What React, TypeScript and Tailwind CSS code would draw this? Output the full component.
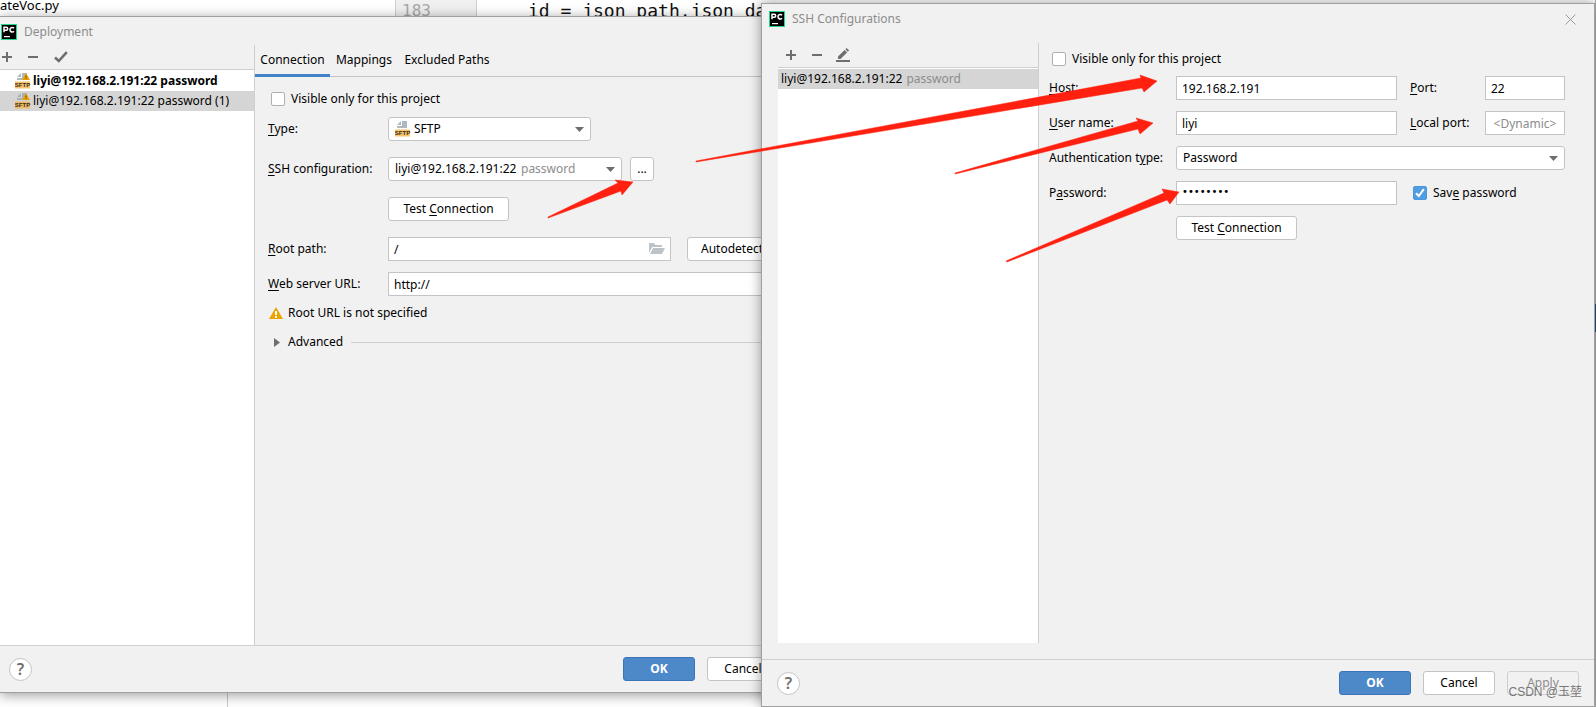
import React, { useState } from "react";

const inputStyle =
  "h-6 min-w-0 border border-[#c4c4c4] bg-white px-[5px] text-black outline-none placeholder:text-[#8c8c8c]";
const buttonStyle =
  "flex h-6 shrink-0 items-center justify-center rounded-[3px] border border-[#c4c4c4] bg-white text-black";
const primaryStyle =
  "flex h-6 w-[72px] shrink-0 items-center justify-center rounded-[3px] border border-[#3b75b8] bg-[#4d89c9] font-bold text-white";

const Mnemonic = ({ text, at = 0 }: { text: string; at?: number }) => (
  <span className="whitespace-pre">
    {text.slice(0, at)}
    <u className="underline-offset-2">{text[at]}</u>
    {text.slice(at + 1)}
  </span>
);

const PyCharmIcon = () => (
  <svg width="16" height="16" viewBox="0 0 16 16" className="shrink-0" aria-hidden="true">
    <rect width="16" height="16" fill="#21d789" />
    <rect x="1" y="1" width="14" height="14" fill="#000" />
    <path
      d="M3 8.2V3.2h2.2a1.5 1.5 0 0 1 0 3H3M13 4.2a2.3 2.3 0 1 0 0 3"
      fill="none"
      stroke="#fff"
      strokeWidth="1.5"
    />
    <rect x="3" y="12" width="6" height="1.2" fill="#fff" />
  </svg>
);

const SftpIcon = ({ warning = false }: { warning?: boolean }) => (
  <svg width="16" height="16" viewBox="0 0 16 16" className="shrink-0" aria-hidden="true">
    <path d="M7 0h5v7H2V5h5z" fill="#9aa7b0" fillOpacity="0.8" />
    <path d="M6 0v4H2z" fill="#9aa7b0" fillOpacity="0.8" />
    <rect x="0" y="8.5" width="15" height="7" fill="#f4af3d" fillOpacity="0.75" />
    <text
      x="7.5"
      y="14.2"
      textAnchor="middle"
      fontSize="6"
      fontWeight="700"
      fontFamily="Liberation Sans, sans-serif"
      fill="#3a2c12"
    >
      SFTP
    </text>
    {warning && (
      <>
        <path d="M11 0 15 7H7z" fill="#eda200" />
        <path d="M10.5 2.5h1v2.2h-1zM10.5 5.3h1v1h-1z" fill="#6b4a00" />
      </>
    )}
  </svg>
);

const PlusIcon = () => (
  <svg width="10" height="10" viewBox="0 0 10 10" aria-hidden="true">
    <path d="M5 0v10M0 5h10" stroke="#6e6e6e" strokeWidth="2" />
  </svg>
);

const MinusIcon = () => (
  <svg width="10" height="10" viewBox="0 0 10 10" aria-hidden="true">
    <path d="M0 5h10" stroke="#6e6e6e" strokeWidth="2" />
  </svg>
);

const CheckIcon = () => (
  <svg width="14" height="12" viewBox="0 0 14 12" aria-hidden="true">
    <path d="M1 6.5 4.8 10 12.8 1.2" fill="none" stroke="#6e6e6e" strokeWidth="2.6" />
  </svg>
);

const EditIcon = () => (
  <svg width="14" height="14" viewBox="0 0 14 14" aria-hidden="true">
    <path d="M2 11V8.4L8.6 2l2.5 2.5L4.5 11z" fill="#6e6e6e" />
    <path d="M9.4 1.3 10.7 0l2.4 2.4-1.3 1.3z" fill="#6e6e6e" />
    <rect x="0" y="12" width="14" height="2" fill="#6e6e6e" />
  </svg>
);

const FolderIcon = () => (
  <svg width="16" height="12" viewBox="0 0 16 12" aria-hidden="true">
    <path d="M0 0h5l1.5 2H13v2H3.2L0 10z" fill="#bcc4c9" />
    <path d="M4 5h12l-3 6H1z" fill="#bcc4c9" />
  </svg>
);

const WarningIcon = () => (
  <svg width="14" height="12" viewBox="0 0 14 12" aria-hidden="true">
    <path d="M7 0 14 12H0z" fill="#eda200" />
    <path d="M6 4h2v4H6zM6 9h2v2H6z" fill="#fff" />
  </svg>
);

type SelectProps = {
  id: string;
  value: string;
  detail?: string;
  icon?: React.ReactNode;
  className: string;
};

const Select = ({ id, value, detail, icon, className }: SelectProps) => (
  <div
    className={`relative flex h-6 items-center rounded-[3px] border border-[#c4c4c4] bg-white pl-1.5 ${className}`}
  >
    {icon}
    <select
      id={id}
      className={`h-full appearance-none bg-transparent text-black outline-none ${
        icon ? "pl-[3px]" : ""
      } ${detail ? "" : "grow"}`}
    >
      <option>{value}</option>
    </select>
    {detail && <span className="ml-1 grow text-[#8c8c8c]">{detail}</span>}
    <svg
      width="9"
      height="5"
      viewBox="0 0 9 5"
      className="pointer-events-none absolute right-1.5"
      aria-hidden="true"
    >
      <path d="M0 0h9L4.5 5z" fill="#6e6e6e" />
    </svg>
  </div>
);

type CheckboxProps = {
  checked: boolean;
  onChange: (checked: boolean) => void;
  children: React.ReactNode;
};

const Checkbox = ({ checked, onChange, children }: CheckboxProps) => (
  <label className="flex items-center gap-1.5">
    <span className="relative flex">
      <input
        type="checkbox"
        checked={checked}
        onChange={(e) => onChange(e.target.checked)}
        className="size-3.5 appearance-none rounded-[2px] border border-[#b0b0b0] bg-white checked:border-[#4b97d9] checked:bg-[#4f9ee3]"
      />
      {checked && (
        <svg
          width="14"
          height="14"
          viewBox="0 0 14 14"
          className="pointer-events-none absolute inset-0"
          aria-hidden="true"
        >
          <path d="M3 7.2 5.8 10 10.8 3.2" fill="none" stroke="#fff" strokeWidth="2" />
        </svg>
      )}
    </span>
    {children}
  </label>
);

const HelpButton = () => (
  <button
    aria-label="Help"
    className="flex size-[23px] items-center justify-center rounded-full border border-[#c4c4c4] bg-white text-base font-semibold text-[#6e6e6e]"
  >
    ?
  </button>
);

const Editor = () => (
  <div className="flex h-full bg-white">
    <div className="flex w-[395px] flex-col justify-between">
      <p className="h-4 text-[13px] leading-[11px]">ateVoc.py</p>
      <div className="h-4 w-[228px] border-r border-[#c9c9c9]" />
    </div>
    <div className="flex h-4 grow font-['DejaVu_Sans_Mono',monospace] leading-[22px]">
      <div className="w-[82px] border-x border-[#d0d0d0] bg-[#f0f0f0] pl-1.5 text-base leading-[22px] text-[#a8a8a8]">
        183
      </div>
      <pre className="pl-[51px] font-['DejaVu_Sans_Mono',monospace] text-lg leading-[22px] text-[#111]">
        id = json_path.json_da
      </pre>
    </div>
    <div className="flex w-px flex-col bg-[#b5b5b5] pt-[304px]">
      <div className="h-7 bg-[#26508f]" />
    </div>
  </div>
);

const Deployment = () => {
  const [onlyProject, setOnlyProject] = useState(false);

  return (
    <section className="absolute top-4 bottom-3.5 left-0 flex w-[calc(50%+20px)] flex-col border-y border-[#a0a0a0] bg-[#f1f1f1] shadow-[0_2px_12px_rgba(0,0,0,0.4)]">
      <div className="flex h-7 items-center gap-[7px] pt-0.5 pl-px text-[#8c8c8c]">
        <PyCharmIcon />
        <h1>Deployment</h1>
      </div>
      <div className="flex min-h-0 grow">
        <div className="flex w-[255px] shrink-0 flex-col border-r border-[#cfcfcf]">
          <div className="flex h-[25px] shrink-0 items-center gap-4 border-b border-[#cfcfcf] pl-0.5">
            <button aria-label="Add">
              <PlusIcon />
            </button>
            <button aria-label="Remove">
              <MinusIcon />
            </button>
            <button aria-label="Use as default">
              <CheckIcon />
            </button>
          </div>
          <ul className="grow bg-white pt-px">
            <li className="flex h-5 items-center gap-0.5 pl-[15px] font-bold">
              <SftpIcon warning />
              liyi@192.168.2.191:22 password
            </li>
            <li className="flex h-5 items-center gap-0.5 bg-[#d5d5d5] pl-[15px]">
              <SftpIcon warning />
              liyi@192.168.2.191:22 password (1)
            </li>
          </ul>
        </div>
        <div className="flex min-w-0 grow flex-col">
          <nav className="flex h-8 shrink-0 border-b border-[#c4c4c4]">
            <button className="h-8 w-[75px] border-b-3 border-[#4083c9]">Connection</button>
            <button className="h-8 w-[68px] border-b-3 border-transparent">Mappings</button>
            <button className="h-8 w-[98px] border-b-3 border-transparent">Excluded Paths</button>
          </nav>
          <div className="flex flex-col pt-[14px] pl-[13px]">
            <div className="flex h-4 items-center pl-[3px]">
              <Checkbox checked={onlyProject} onChange={setOnlyProject}>
                Visible only for this project
              </Checkbox>
            </div>
            <div className="mt-2.5 grid grid-cols-[120px_1fr] items-center gap-y-4">
              <label htmlFor="type">
                <Mnemonic text="Type:" />
              </label>
              <Select id="type" value="SFTP" icon={<SftpIcon />} className="w-[203px]" />
              <label htmlFor="ssh">
                <Mnemonic text="SSH configuration:" />
              </label>
              <div className="flex gap-2">
                <Select
                  id="ssh"
                  value="liyi@192.168.2.191:22"
                  detail="password"
                  className="w-[234px]"
                />
                <button className={`${buttonStyle} w-6`}>...</button>
              </div>
              <button className={`${buttonStyle} col-start-2 w-[121px]`}>
                <Mnemonic text="Test Connection" at={5} />
              </button>
            </div>
            <div className="mt-4 grid grid-cols-[120px_1fr] items-center gap-y-[11px]">
              <label htmlFor="root">
                <Mnemonic text="Root path:" />
              </label>
              <div className="flex gap-4">
                <div className="relative flex w-[283px] items-center">
                  <input id="root" defaultValue="/" className={`${inputStyle} w-full`} />
                  <button aria-label="Browse" className="absolute right-1.5">
                    <FolderIcon />
                  </button>
                </div>
                <button className={`${buttonStyle} w-[90px]`}>Autodetect</button>
              </div>
              <label htmlFor="url">
                <Mnemonic text="Web server URL:" />
              </label>
              <input id="url" defaultValue="http://" className={inputStyle} />
            </div>
            <p className="mt-[7px] flex h-5 items-center gap-[5px] pl-px">
              <WarningIcon />
              Root URL is not specified
            </p>
            <div className="mt-[9px] flex h-5 items-center">
              <button className="flex items-center gap-2 pl-1.5">
                <svg width="6" height="9" viewBox="0 0 6 9" aria-hidden="true">
                  <path d="M0 0v9l6-4.5z" fill="#6e6e6e" />
                </svg>
                Advanced
              </button>
              <div className="ml-2 h-px grow bg-[#cfcfcf]" />
            </div>
          </div>
        </div>
      </div>
      <div className="flex h-[47px] shrink-0 items-center border-t border-[#cfcfcf] pl-[9px]">
        <HelpButton />
        <button className={`${primaryStyle} mr-3 ml-auto`}>OK</button>
        <button className={`${buttonStyle} mr-[39px] w-[72px]`}>Cancel</button>
      </div>
    </section>
  );
};

const SshConfigurations = () => {
  const [onlyProject, setOnlyProject] = useState(false);
  const [savePassword, setSavePassword] = useState(true);

  return (
    <section className="absolute top-[3px] right-px bottom-0 left-[761px] flex flex-col border border-[#a0a0a0] bg-[#f1f1f1] shadow-[0_0_12px_rgba(0,0,0,0.4)]">
      <div className="flex h-7 shrink-0 items-center gap-[7px] pt-0.5 pr-[18px] pl-[7px] text-[#8c8c8c]">
        <PyCharmIcon />
        <h1>SSH Configurations</h1>
        <button aria-label="Close" className="ml-auto">
          <svg width="11" height="11" viewBox="0 0 11 11" aria-hidden="true">
            <path d="M0.5 0.5l10 10M10.5 0.5l-10 10" stroke="#999" strokeWidth="1" />
          </svg>
        </button>
      </div>
      <div className="flex min-h-0 grow pt-[11px] pb-4 pl-4">
        <div className="flex w-[261px] shrink-0 flex-col border-r border-[#cfcfcf]">
          <div className="flex h-[25px] shrink-0 items-center gap-4 border-b border-[#cfcfcf] pl-2">
            <button aria-label="Add">
              <PlusIcon />
            </button>
            <button aria-label="Remove">
              <MinusIcon />
            </button>
            <button aria-label="Rename" className="-ml-0.5">
              <EditIcon />
            </button>
          </div>
          <ul className="grow bg-white pt-px">
            <li className="flex h-5 items-center gap-1 bg-[#d5d5d5] pl-[3px]">
              liyi@192.168.2.191:22 <span className="text-[#8c8c8c]">password</span>
            </li>
          </ul>
        </div>
        <div className="flex grow flex-col gap-[9px] pt-2 pr-[29px] pl-[10px]">
          <div className="flex h-4 items-center pl-[3px]">
            <Checkbox checked={onlyProject} onChange={setOnlyProject}>
              Visible only for this project
            </Checkbox>
          </div>
          <div className="grid grid-cols-[127px_1fr_88px_80px] items-center gap-y-[11px]">
            <label htmlFor="host">
              <Mnemonic text="Host:" />
            </label>
            <input id="host" defaultValue="192.168.2.191" className={inputStyle} />
            <label htmlFor="port" className="pl-[13px]">
              <Mnemonic text="Port:" />
            </label>
            <input id="port" defaultValue="22" className={inputStyle} />
            <label htmlFor="user">
              <Mnemonic text="User name:" />
            </label>
            <input id="user" defaultValue="liyi" className={inputStyle} />
            <label htmlFor="local" className="pl-[13px]">
              <Mnemonic text="Local port:" />
            </label>
            <input id="local" placeholder="<Dynamic>" className={`${inputStyle} text-center`} />
            <label htmlFor="auth">
              <Mnemonic text="Authentication type:" at={16} />
            </label>
            <Select id="auth" value="Password" className="col-span-3" />
            <label htmlFor="password">
              <Mnemonic text="Password:" at={1} />
            </label>
            <input
              id="password"
              type="password"
              defaultValue="password"
              className={`${inputStyle} pb-1 font-['DejaVu_Sans',sans-serif] text-[10px]`}
            />
            <div className="col-span-2 pl-4">
              <Checkbox checked={savePassword} onChange={setSavePassword}>
                <Mnemonic text="Save password" at={3} />
              </Checkbox>
            </div>
            <button className={`${buttonStyle} col-start-2 w-[121px]`}>
              <Mnemonic text="Test Connection" at={5} />
            </button>
          </div>
        </div>
      </div>
      <div className="relative flex h-[47px] shrink-0 items-center gap-3 border-t border-[#cfcfcf] pr-[15px] pl-[15px]">
        <HelpButton />
        <button className={`${primaryStyle} ml-auto`}>OK</button>
        <button className={`${buttonStyle} w-[72px]`}>Cancel</button>
        <button
          disabled
          className="h-6 w-[72px] rounded-[3px] border border-[#cfcfcf] text-[#8c8c8c]"
        >
          Apply
        </button>
        <span className="absolute right-3 bottom-1.5 font-['Liberation_Sans','Noto_Sans_CJK_SC',sans-serif] text-[#777]">
          CSDN @玉堃
        </span>
      </div>
    </section>
  );
};

// hand-drawn pointers, in page pixels
const arrows = [
  "M696 161 1141 78 1140 75 1157 81 1144 92 1142 88 696 162z",
  "M955 173 1138 121 1136 118 1153 123 1140 134 1138 129 955 174z",
  "M1006 261 1164 193 1162 189 1179 192 1170 204 1167 200 1007 262z",
  "M548 217 618 183 615 180 633 182 622 195 621 191 548 218z",
];

const App = () => {
  return (
    <div className="relative h-screen overflow-hidden font-['Noto_Sans','Noto_Sans_CJK_SC',sans-serif] text-xs text-black">
      <Editor />
      <Deployment />
      <SshConfigurations />
      <svg className="pointer-events-none absolute inset-0 h-full w-full" aria-hidden="true">
        {arrows.map((d) => (
          <path key={d} d={d} fill="#ff2010" stroke="#ff2010" strokeWidth="0.5" />
        ))}
      </svg>
    </div>
  );
};

export default App;
